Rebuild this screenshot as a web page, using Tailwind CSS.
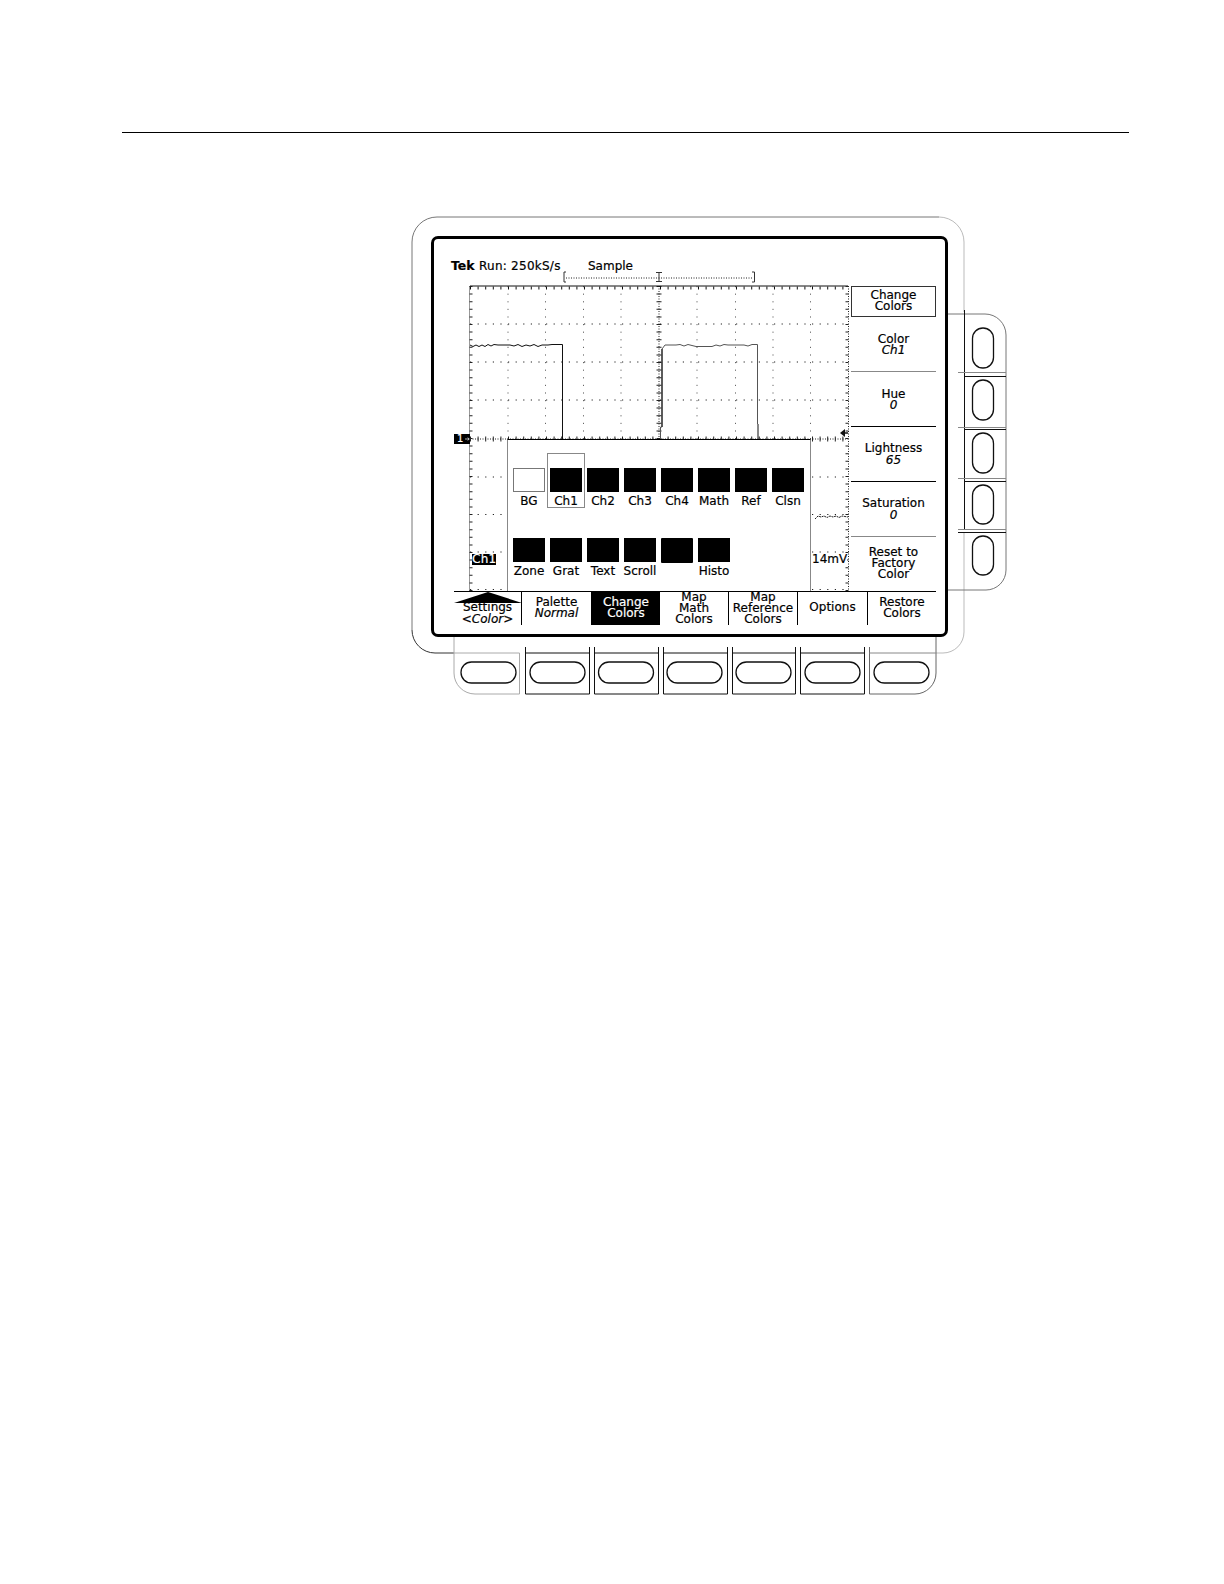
<!DOCTYPE html>
<html lang="en">
<head>
<meta charset="UTF-8">
<title>Change Colors</title>
<script src="https://cdn.jsdelivr.net/npm/@tailwindcss/browser@4"></script>
</head>
<body class="bg-white text-black font-['DejaVu_Sans',sans-serif] text-[12px] leading-[11.3px] [-webkit-text-stroke:0.2px]">
<div class="relative w-[1224px] h-[1584px] overflow-hidden">

  <!-- bezel, buttons and graticule, drawn in page coordinates -->
  <svg class="absolute top-0 left-0" width="1224" height="1584" viewBox="0 0 1224 1584" fill="none">
    <!-- bezel -->
    <path d="M412 630V242A25 25 0 0 1 437 217H939" stroke="#777"/>
    <path d="M939 217A25 25 0 0 1 964 242V312" stroke="#bbb"/>
    <path d="M412 630A23 23 0 0 0 435 653H454" stroke="#333"/>
    <path d="M964 532V632A21 21 0 0 1 943 653H936" stroke="#bbb"/>
    <path d="M454 637V673A21 21 0 0 0 475 694H519.500V653H454" stroke="#aaa"/>
    <path d="M936 637V673A21 21 0 0 1 915 694H869.500V647" stroke="#666"/>
    <path d="M869.500 653H936" stroke="#888"/>
    <path d="M525.500 647V694H589.500V647M594.500 647V694H658.500V647M663.500 647V694H727.500V647M732.500 647V694H795.500V647M800.500 647V694H864.500V647M525.500 653H589.500M594.500 653H658.500M663.500 653H727.500M732.500 653H795.500M800.500 653H864.500" stroke="#111"/>
    <!-- side tabs -->
    <path d="M948 314H985A21 21 0 0 1 1006 335V372" stroke="#777"/>
    <path d="M1006 372V570A20 20 0 0 1 986 590H948" stroke="#777"/>
    <path d="M964.500 310V530" stroke="#111"/>
    <path d="M958 372.500H1006M958 427.500H1006M958 478.500H1006M958 529.500H1006" stroke="#888"/>
    <path d="M964 376.500H1006M964 429.500H1006M964 481.500H1006M958 532.500H1006" stroke="#111"/>
    <!-- side buttons -->
    <g stroke="#111" stroke-width="1.300">
      <rect x="972.500" y="328" width="21" height="40" rx="10.500"/>
      <rect x="972.500" y="380" width="21" height="40" rx="10.500"/>
      <rect x="972.500" y="433" width="21" height="40" rx="10.500"/>
      <rect x="972.500" y="485" width="21" height="39" rx="10.500"/>
      <rect x="972.500" y="536" width="21" height="39" rx="10.500"/>
      <rect x="461" y="662" width="55" height="21" rx="10.500"/>
      <rect x="530" y="662" width="55" height="21" rx="10.500"/>
      <rect x="598.500" y="662" width="55" height="21" rx="10.500"/>
      <rect x="667" y="662" width="55" height="21" rx="10.500"/>
      <rect x="736" y="662" width="55" height="21" rx="10.500"/>
      <rect x="805" y="662" width="55" height="21" rx="10.500"/>
      <rect x="874" y="662" width="55" height="21" rx="10.500"/>
    </g>
    <!-- record-length bracket -->
    <path d="M566 272H564V282H566M752 272H754.500V282H752M656 272.500H662M656 281.500H662M659 272V282" stroke="#333"/>
    <path d="M566 278H752" stroke="#222" stroke-dasharray="1 1.500"/>
    <!-- graticule dots -->
    <path d="M508 286V591M545.500 286V591M583.500 286V591M621 286V591M697 286V591M735.500 286V591M773 286V591M810.500 286V591" stroke="#666" stroke-dasharray="1.200 6.400"/>
    <path d="M470 324H848M470 362H848M470 400H848M470 477H848M470 514.500H848M470 552H848M470 589.500H848" stroke="#222" stroke-dasharray="1.200 6.400"/>
    <!-- centre lines with ticks -->
    <path d="M470 439H848" stroke="#222" stroke-dasharray="1 1.500"/>
    <path d="M470 439H848" stroke="#222" stroke-width="5" stroke-dasharray="1 6.600"/>
    <path d="M659 286V591" stroke="#222" stroke-dasharray="1 1.500"/>
    <path d="M659 286V591" stroke="#222" stroke-width="5" stroke-dasharray="1 6.600"/>
    <!-- graticule edges -->
    <path d="M470 286H848" stroke="#111"/>
    <path d="M470 288H848" stroke="#111" stroke-width="3" stroke-dasharray="1 6.600"/>
    <path d="M469.500 286V591" stroke="#999"/>
    <path d="M471 286V591" stroke="#222" stroke-width="3" stroke-dasharray="1 6.600"/>
    <path d="M848.500 286V591" stroke="#222" stroke-dasharray="1 1.500"/>
    <path d="M847 286V591" stroke="#222" stroke-width="3" stroke-dasharray="1 6.600"/>
    <!-- waveform -->
    <path d="M470 345L473 346.500L476 345L479 346.500L482 345L485 346.500L488 344.500L491 346L494 344.500L498 345H510L514 346L518 344.500L522 346.500L526 345L530 346L534 344.500L538 346.500L542 345H548L552 344.500H562.500V439" stroke="#111"/>
    <path d="M660.500 439V427H662V349L665 345H676L680 344.500L684 346L688 344.500L692 345.500L696 346.500H712L716 345L720 346L724 344.500L728 345H744L748 346L752 344.500H757.500V424" stroke="#555"/>
    <path d="M662 427V349" stroke="#111"/>
    <path d="M758 424V439" stroke="#111"/>
    <path d="M815 519L818 516L821 517L824 516L827 517.500L830 516L833 517L836 516L839 517.500L842 516L848 517" stroke="#222" stroke-dasharray="2 0.700"/>
    <!-- ground reference arrow -->
    <path d="M840 433L845 429V437Z" fill="#111"/>
    <path d="M845 433H848" stroke="#111" stroke-width="1.500"/>
  </svg>

  <div class="relative h-[1.300px] ml-[122px] mt-[132px] w-[1007px] bg-black"></div>

  <!-- scope screen -->
  <div class="relative ml-[431px] mt-[103px] w-[517px] h-[401px] border-[3px] border-black rounded-[7px]">
    <div class="flex h-[47px] pl-[17px] pt-[21px] items-start whitespace-nowrap leading-[12px]">
      <span class="font-bold w-[28px] text-[12.500px]">Tek</span>
      <span class="w-[109px] tracking-[0.250px]">Run: 250kS/s</span>
      <span>Sample</span>
    </div>

    <div class="flex">
      <div class="relative ml-[36px] w-[378px] h-[305px]">
        <div class="absolute left-[-16px] top-[148px] w-[16px] h-[10px] bg-black text-white text-[10px] leading-[10px] pl-[3px] flex items-center gap-[2px]">
          <span>1</span>
          <svg width="7" height="6" viewBox="0 0 7 6" fill="none"><path d="M0 3H6M4 1L6.500 3L4 5" stroke="#fff"/></svg>
        </div>
        <span class="absolute left-[2px] top-[268px] w-[24px] h-[11px] bg-black text-white leading-[11px] text-center tracking-[0.300px]">Ch1</span>

        <!-- colour palette readout -->
        <div class="absolute left-[37px] top-[153px] w-[304px] h-[152px] bg-white border-x border-[#888] border-t border-t-black pl-[5px] pt-[28px]">
          <div class="absolute left-[39px] top-[13px] w-[38px] h-[55px] border border-[#888]"></div>
          <div class="relative grid grid-cols-[repeat(8,32px)] gap-x-[5px] h-[70px]">
            <div class="flex flex-col items-center"><div class="w-[32px] h-[24px] border border-[#777] bg-white"></div><span class="mt-[4px] leading-[11px] whitespace-nowrap">BG</span></div>
            <div class="flex flex-col items-center"><div class="w-[32px] h-[24px] bg-black"></div><span class="mt-[4px] leading-[11px] whitespace-nowrap">Ch1</span></div>
            <div class="flex flex-col items-center"><div class="w-[32px] h-[24px] bg-black"></div><span class="mt-[4px] leading-[11px] whitespace-nowrap">Ch2</span></div>
            <div class="flex flex-col items-center"><div class="w-[32px] h-[24px] bg-black"></div><span class="mt-[4px] leading-[11px] whitespace-nowrap">Ch3</span></div>
            <div class="flex flex-col items-center"><div class="w-[32px] h-[24px] bg-black"></div><span class="mt-[4px] leading-[11px] whitespace-nowrap">Ch4</span></div>
            <div class="flex flex-col items-center"><div class="w-[32px] h-[24px] bg-black"></div><span class="mt-[4px] leading-[11px] whitespace-nowrap">Math</span></div>
            <div class="flex flex-col items-center"><div class="w-[32px] h-[24px] bg-black"></div><span class="mt-[4px] leading-[11px] whitespace-nowrap">Ref</span></div>
            <div class="flex flex-col items-center"><div class="w-[32px] h-[24px] bg-black"></div><span class="mt-[4px] leading-[11px] whitespace-nowrap">Clsn</span></div>
          </div>
          <div class="grid grid-cols-[repeat(8,32px)] gap-x-[5px]">
            <div class="flex flex-col items-center"><div class="w-[32px] h-[24px] bg-black"></div><span class="mt-[4px] leading-[11px] whitespace-nowrap">Zone</span></div>
            <div class="flex flex-col items-center"><div class="w-[32px] h-[24px] bg-black"></div><span class="mt-[4px] leading-[11px] whitespace-nowrap">Grat</span></div>
            <div class="flex flex-col items-center"><div class="w-[32px] h-[24px] bg-black"></div><span class="mt-[4px] leading-[11px] whitespace-nowrap">Text</span></div>
            <div class="flex flex-col items-center"><div class="w-[32px] h-[24px] bg-black"></div><span class="mt-[4px] leading-[11px] whitespace-nowrap">Scroll</span></div>
            <div class="flex flex-col items-center"><div class="w-[32px] h-[25px] bg-black rounded-[1px]"></div></div>
            <div class="flex flex-col items-center"><div class="w-[32px] h-[24px] bg-black"></div><span class="mt-[4px] leading-[11px] whitespace-nowrap">Histo</span></div>
          </div>
        </div>

        <span class="absolute left-[342px] top-[268px] w-[35px] bg-white leading-[11px] whitespace-nowrap">14mV</span>
      </div>

      <!-- side menu -->
      <div class="ml-[3px] w-[85px] flex flex-col text-center">
        <div class="h-[31px] border border-[#333] pb-[2px] flex flex-col justify-center">Change<br>Colors</div>
        <div class="h-[55px] border-b border-[#888] pt-[1px] flex flex-col justify-center"><span>Color</span><em>Ch1</em></div>
        <div class="h-[55px] border-b border-black pt-[1px] flex flex-col justify-center"><span>Hue</span><em>0</em></div>
        <div class="h-[55px] border-b border-black flex flex-col justify-center"><span>Lightness</span><em class="mt-[0.500px]">65</em></div>
        <div class="h-[55px] border-b border-[#888] flex flex-col justify-center"><span>Saturation</span><em class="mt-[0.500px]">0</em></div>
        <div class="h-[54px] pb-[1px] flex flex-col justify-center"><span>Reset to</span><span>Factory</span><span>Color</span></div>
      </div>
    </div>

    <!-- bottom menu -->
    <div class="relative ml-[20px] w-[482px] h-[34px] bg-white border-t border-black grid grid-cols-[68px_70px_68px_69px_69px_70px_68px] text-center overflow-hidden">
      <svg class="absolute left-0 top-0" width="68" height="12" viewBox="0 0 68 12"><path d="M0 11L34 0L68 11Z" fill="#000"/></svg>
      <div class="pt-[10px] border-r border-black flex flex-col"><span>Settings</span><em>&lt;Color&gt;</em></div>
      <div class="pb-[2px] border-r border-black flex flex-col justify-center"><span>Palette</span><em>Normal</em></div>
      <div class="pb-[2px] bg-black text-white flex flex-col justify-center"><span>Change</span><span>Colors</span></div>
      <div class="border-r border-black flex flex-col justify-start leading-[11px] whitespace-nowrap"><span>Map</span><span>Math</span><span>Colors</span></div>
      <div class="border-r border-black flex flex-col justify-start leading-[11px] whitespace-nowrap"><span>Map</span><span>Reference</span><span>Colors</span></div>
      <div class="pb-[2px] border-r border-black flex flex-col justify-center"><span>Options</span></div>
      <div class="pb-[2px] flex flex-col justify-center"><span>Restore</span><span>Colors</span></div>
    </div>
  </div>
</div>
</body>
</html>
